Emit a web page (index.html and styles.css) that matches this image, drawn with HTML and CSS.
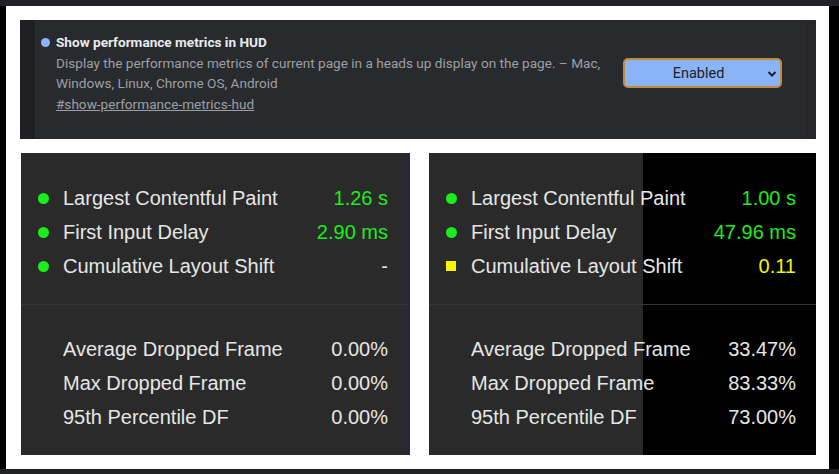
FILE: index.html
```html
<!DOCTYPE html>
<html>
<head>
<meta charset="utf-8">
<link rel="stylesheet" href="styles.css">
</head>
<body>
<div class="strip"></div>
<div class="frame">
  <section class="flag">
    <div class="flag-edge"></div>
    <div class="flag-body">
      <div class="flag-text">
        <div class="flag-title"><span class="flag-dot"></span>Show performance metrics in HUD</div>
        <p class="flag-desc">Display the performance metrics of current page in a heads up display on the page. – Mac, Windows, Linux, Chrome OS, Android</p>
        <a class="flag-link">#show-performance-metrics-hud</a>
      </div>
      <div class="select">
        <span>Enabled</span>
        <svg class="chev" width="10" height="8" viewBox="0 0 10 8"><path d="M1.5 2 L5 5.5 L8.5 2" fill="none" stroke="#202124" stroke-width="2"/></svg>
      </div>
    </div>
    <div class="flag-right"></div>
  </section>
  <div class="huds">
    <section class="hud hud-left">
      <div class="hud-sec">
        <div class="row"><span class="mark dot"></span><span class="label">Largest Contentful Paint</span><span class="val green">1.26 s</span></div>
        <div class="row"><span class="mark dot"></span><span class="label">First Input Delay</span><span class="val green">2.90 ms</span></div>
        <div class="row"><span class="mark dot"></span><span class="label">Cumulative Layout Shift</span><span class="val">-</span></div>
      </div>
      <div class="hud-sec hud-sec2">
        <div class="row"><span class="mark"></span><span class="label">Average Dropped Frame</span><span class="val">0.00%</span></div>
        <div class="row"><span class="mark"></span><span class="label">Max Dropped Frame</span><span class="val">0.00%</span></div>
        <div class="row"><span class="mark"></span><span class="label">95th Percentile DF</span><span class="val">0.00%</span></div>
      </div>
    </section>
    <section class="hud hud-right">
      <div class="hud-sec">
        <div class="row"><span class="mark dot"></span><span class="label">Largest Contentful Paint</span><span class="val green">1.00 s</span></div>
        <div class="row"><span class="mark dot"></span><span class="label">First Input Delay</span><span class="val green">47.96 ms</span></div>
        <div class="row"><span class="mark square"></span><span class="label">Cumulative Layout Shift</span><span class="val yellow">0.11</span></div>
      </div>
      <div class="hud-sec hud-sec2">
        <div class="row"><span class="mark"></span><span class="label">Average Dropped Frame</span><span class="val">33.47%</span></div>
        <div class="row"><span class="mark"></span><span class="label">Max Dropped Frame</span><span class="val">83.33%</span></div>
        <div class="row"><span class="mark"></span><span class="label">95th Percentile DF</span><span class="val">73.00%</span></div>
      </div>
    </section>
  </div>
</div>
<div class="strip strip-bottom"></div>
</body>
</html>
```

FILE: styles.css
```css
html, body {
  margin: 0;
  padding: 0;
}
body {
  background: #000;
  width: 839px;
  height: 474px;
  overflow: hidden;
}
.strip {
  height: 6px;
  background: #202125;
}
.strip-bottom {
  height: 5px;
}
.frame {
  margin-left: 6px;
  width: 823px;
  height: 463px;
  box-sizing: border-box;
  background: #fff;
  padding: 14px 13px 0 14px;
}
.flag {
  display: flex;
  height: 119px;
  background: #292a2d;
}
.flag-edge {
  width: 15px;
  background: #1f2023;
}
.flag-right {
  width: 10px;
  background: #27272b;
}
.flag-body {
  flex: 1;
  display: flex;
  justify-content: space-between;
  padding: 14px 24px 0 6px;
  font-family: Roboto, "Liberation Sans", sans-serif;
}
.flag-title {
  display: flex;
  align-items: center;
  color: #e8eaed;
  font-weight: 700;
  font-size: 13.6px;
  line-height: 16px;
}
.flag-dot {
  width: 9px;
  height: 9px;
  border-radius: 50%;
  background: #8ab4f8;
  margin-right: 6px;
}
.flag-desc {
  margin: 3px 0 0 15px;
  width: 560px;
  color: #9aa0a6;
  font-size: 13.6px;
  line-height: 20px;
}
.flag-link {
  display: inline-block;
  margin: 1px 0 0 15px;
  color: #9aa0a6;
  font-size: 13.6px;
  line-height: 20px;
  text-decoration: underline;
}
.select {
  margin-top: 24px;
  width: 159px;
  height: 30px;
  box-sizing: border-box;
  border: 2px solid #c48a3c;
  border-radius: 5px;
  background: #8ab4f8;
  display: flex;
  align-items: center;
  justify-content: center;
  position: relative;
  color: #202124;
  font-size: 14.5px;
}
.select span {
  margin-left: -8px;
}
.chev {
  position: absolute;
  right: 3px;
  top: 10px;
}
.huds {
  display: flex;
  margin-top: 14px;
  gap: 19px;
}
.hud {
  height: 302px;
  box-sizing: border-box;
  font-family: "Liberation Sans", Arial, sans-serif;
  font-size: 20px;
  color: #e6e6e6;
}
.hud-left {
  margin-left: 1px;
  width: 389px;
  background: #2a2a2a;
  border-right: 2px solid #26244f;
}
.hud-right {
  width: 387px;
  background: linear-gradient(to right, #2a2a2a 0, #2a2a2a 214px, #000 214px);
}
.hud-sec {
  padding: 28px 20px 21px 17px;
}
.hud-sec2 {
  border-top: 1px solid #363636;
  padding-top: 27px;
}
.row {
  display: flex;
  align-items: center;
  height: 34px;
}
.mark {
  width: 11px;
  height: 11px;
  margin-right: 14px;
}
.dot {
  border-radius: 50%;
  background: #1ced1c;
}
.square {
  width: 10px;
  height: 10px;
  margin-right: 15px;
  background: #f6f600;
}
.label {
  flex: 1;
}
.val {
  text-align: right;
}
.green {
  color: #1ced1c;
}
.yellow {
  color: #f3f300;
}
```
